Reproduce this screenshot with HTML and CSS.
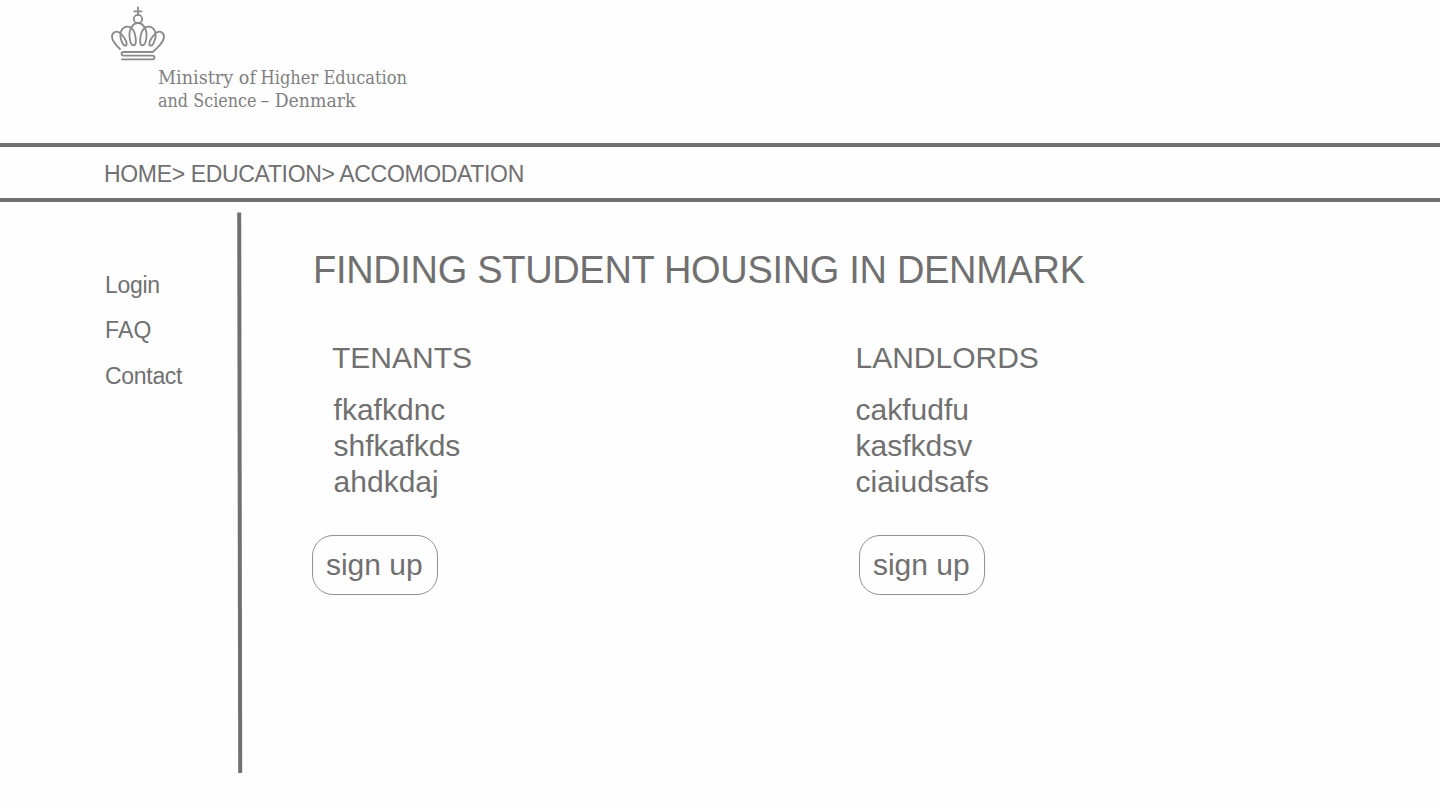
FILE: index.html
```html
<!DOCTYPE html>
<html lang="en">
<head>
<meta charset="utf-8">
<title>Finding Student Housing in Denmark</title>
<link rel="stylesheet" href="styles.css">
</head>
<body>
<header class="header">
  <svg class="logo" width="440" height="120" viewBox="0 0 440 120">
    <g class="crown" transform="scale(.3333)">
      <path d="M114 22V45M103 34H125"/>
      <circle cx="114" cy="57" r="12.5"/>
      <path d="M60 147C45 133 35 120 36 108C38 94 52 91 62 101C73 112 79 122 80 131C80 139 72 139 68 131C62 119 58 105 64 92C71 78 89 75 98 88C106 99 109 118 107 130C105 138 97 138 93 130C88 118 86 98 92 86C97 76 105 69 114 69"/>
      <path d="M66 178H158C165 178 165 167 158 167H70C63 167 63 156 70 156H158L170 145C183 133 193 120 192 108C190 94 176 91 166 101C155 112 149 122 148 131C148 139 156 139 160 131C166 119 170 105 164 92C157 78 139 75 130 88C122 99 119 118 121 130C123 138 131 138 135 130C140 118 142 98 136 86C131 76 123 69 114 69"/>
    </g>
    <g class="logo-text">
      <text x="58" y="83.5" textLength="98" lengthAdjust="spacingAndGlyphs">Ministry of</text>
      <text x="160.5" y="83.5" textLength="146.5" lengthAdjust="spacingAndGlyphs">Higher Education</text>
      <text x="58" y="106.5" textLength="98.5" lengthAdjust="spacingAndGlyphs">and Science</text>
      <text x="160.5" y="106.5" textLength="95" lengthAdjust="spacingAndGlyphs">– Denmark</text>
    </g>
  </svg>
</header>
<nav class="breadcrumb"><span class="crumbs">HOME&gt; EDUCATION&gt; ACCOMODATION</span></nav>
<div class="layout">
  <aside class="sidebar">
    <a class="login">Login</a>
    <a class="faq">FAQ</a>
    <a class="contact">Contact</a>
  </aside>
  <svg class="divider" width="8" height="562" viewBox="0 0 8 562"><path d="M3.2 .5L4.2 561"/></svg>
  <main class="main">
    <h1 class="title">FINDING STUDENT HOUSING IN DENMARK</h1>
    <div class="columns">
      <section class="tenants">
        <h2 class="heading">TENANTS</h2>
        <ul class="list"><li>fkafkdnc</li><li>shfkafkds</li><li>ahdkdaj</li></ul>
        <button class="signup">sign up</button>
      </section>
      <section class="landlords">
        <h2 class="heading">LANDLORDS</h2>
        <ul class="list"><li>cakfudfu</li><li>kasfkdsv</li><li>ciaiudsafs</li></ul>
        <button class="signup">sign up</button>
      </section>
    </div>
  </main>
</div>
</body>
</html>
```
FILE: styles.css
```css
* { box-sizing: border-box; }
body {
  margin: 0;
  height: 806px;
  overflow: hidden;
  background: #fefefe;
  color: #707070;
  font-family: "Liberation Sans", Arial, sans-serif;
}
.header { height: 143px; padding-left: 100px; }
.logo { display: block; }
.crown { fill: none; stroke: #8a8a8a; stroke-width: 5.5; stroke-linecap: round; }
.logo-text { fill: #808080; font: 18.5px "DejaVu Serif", serif; }
.breadcrumb {
  height: 59px;
  padding-left: 104px;
  border-top: 4px solid #707070;
  border-bottom: 4px solid #707070;
  font-size: 23px;
  line-height: 54px;
  white-space: nowrap;
}
.crumbs { letter-spacing: -0.34px; }
.layout { display: flex; padding-top: 10px; }
.sidebar {
  display: flex;
  flex-direction: column;
  width: 236px;
  padding: 60px 0 0 105px;
  font-size: 23px;
  line-height: 26px;
}
.login, .contact { letter-spacing: -0.3px; }
.faq { margin-top: 19px; letter-spacing: 0.2px; }
.contact { margin-top: 20px; }
.divider { flex: none; }
.divider path { stroke: #707070; stroke-width: 4; }
.main { padding: 36px 0 0 68px; }
.title {
  margin: 0;
  padding-left: 1px;
  font-size: 38px;
  line-height: 44px;
  font-weight: 400;
  letter-spacing: -0.32px;
  white-space: nowrap;
}
.columns { display: grid; grid-template-columns: 547px 300px; margin-top: 48px; }
.heading { margin: 0; padding-left: 20px; font-size: 30px; line-height: 36px; font-weight: 400; }
.list { margin: 16px 0 0; padding: 0 0 0 21.6px; list-style: none; font-size: 30px; line-height: 36px; }
.landlords .heading, .landlords .list { padding-left: 0; margin-left: -3.5px; }
.signup {
  display: block;
  width: 125.5px;
  height: 60px;
  margin-top: 35px;
  padding: 0 1px 0 0;
  border: 1px solid #929292;
  border-radius: 21px;
  background: #fefefe;
  color: inherit;
  font: 30px/56px "Liberation Sans", Arial, sans-serif;
}
```
